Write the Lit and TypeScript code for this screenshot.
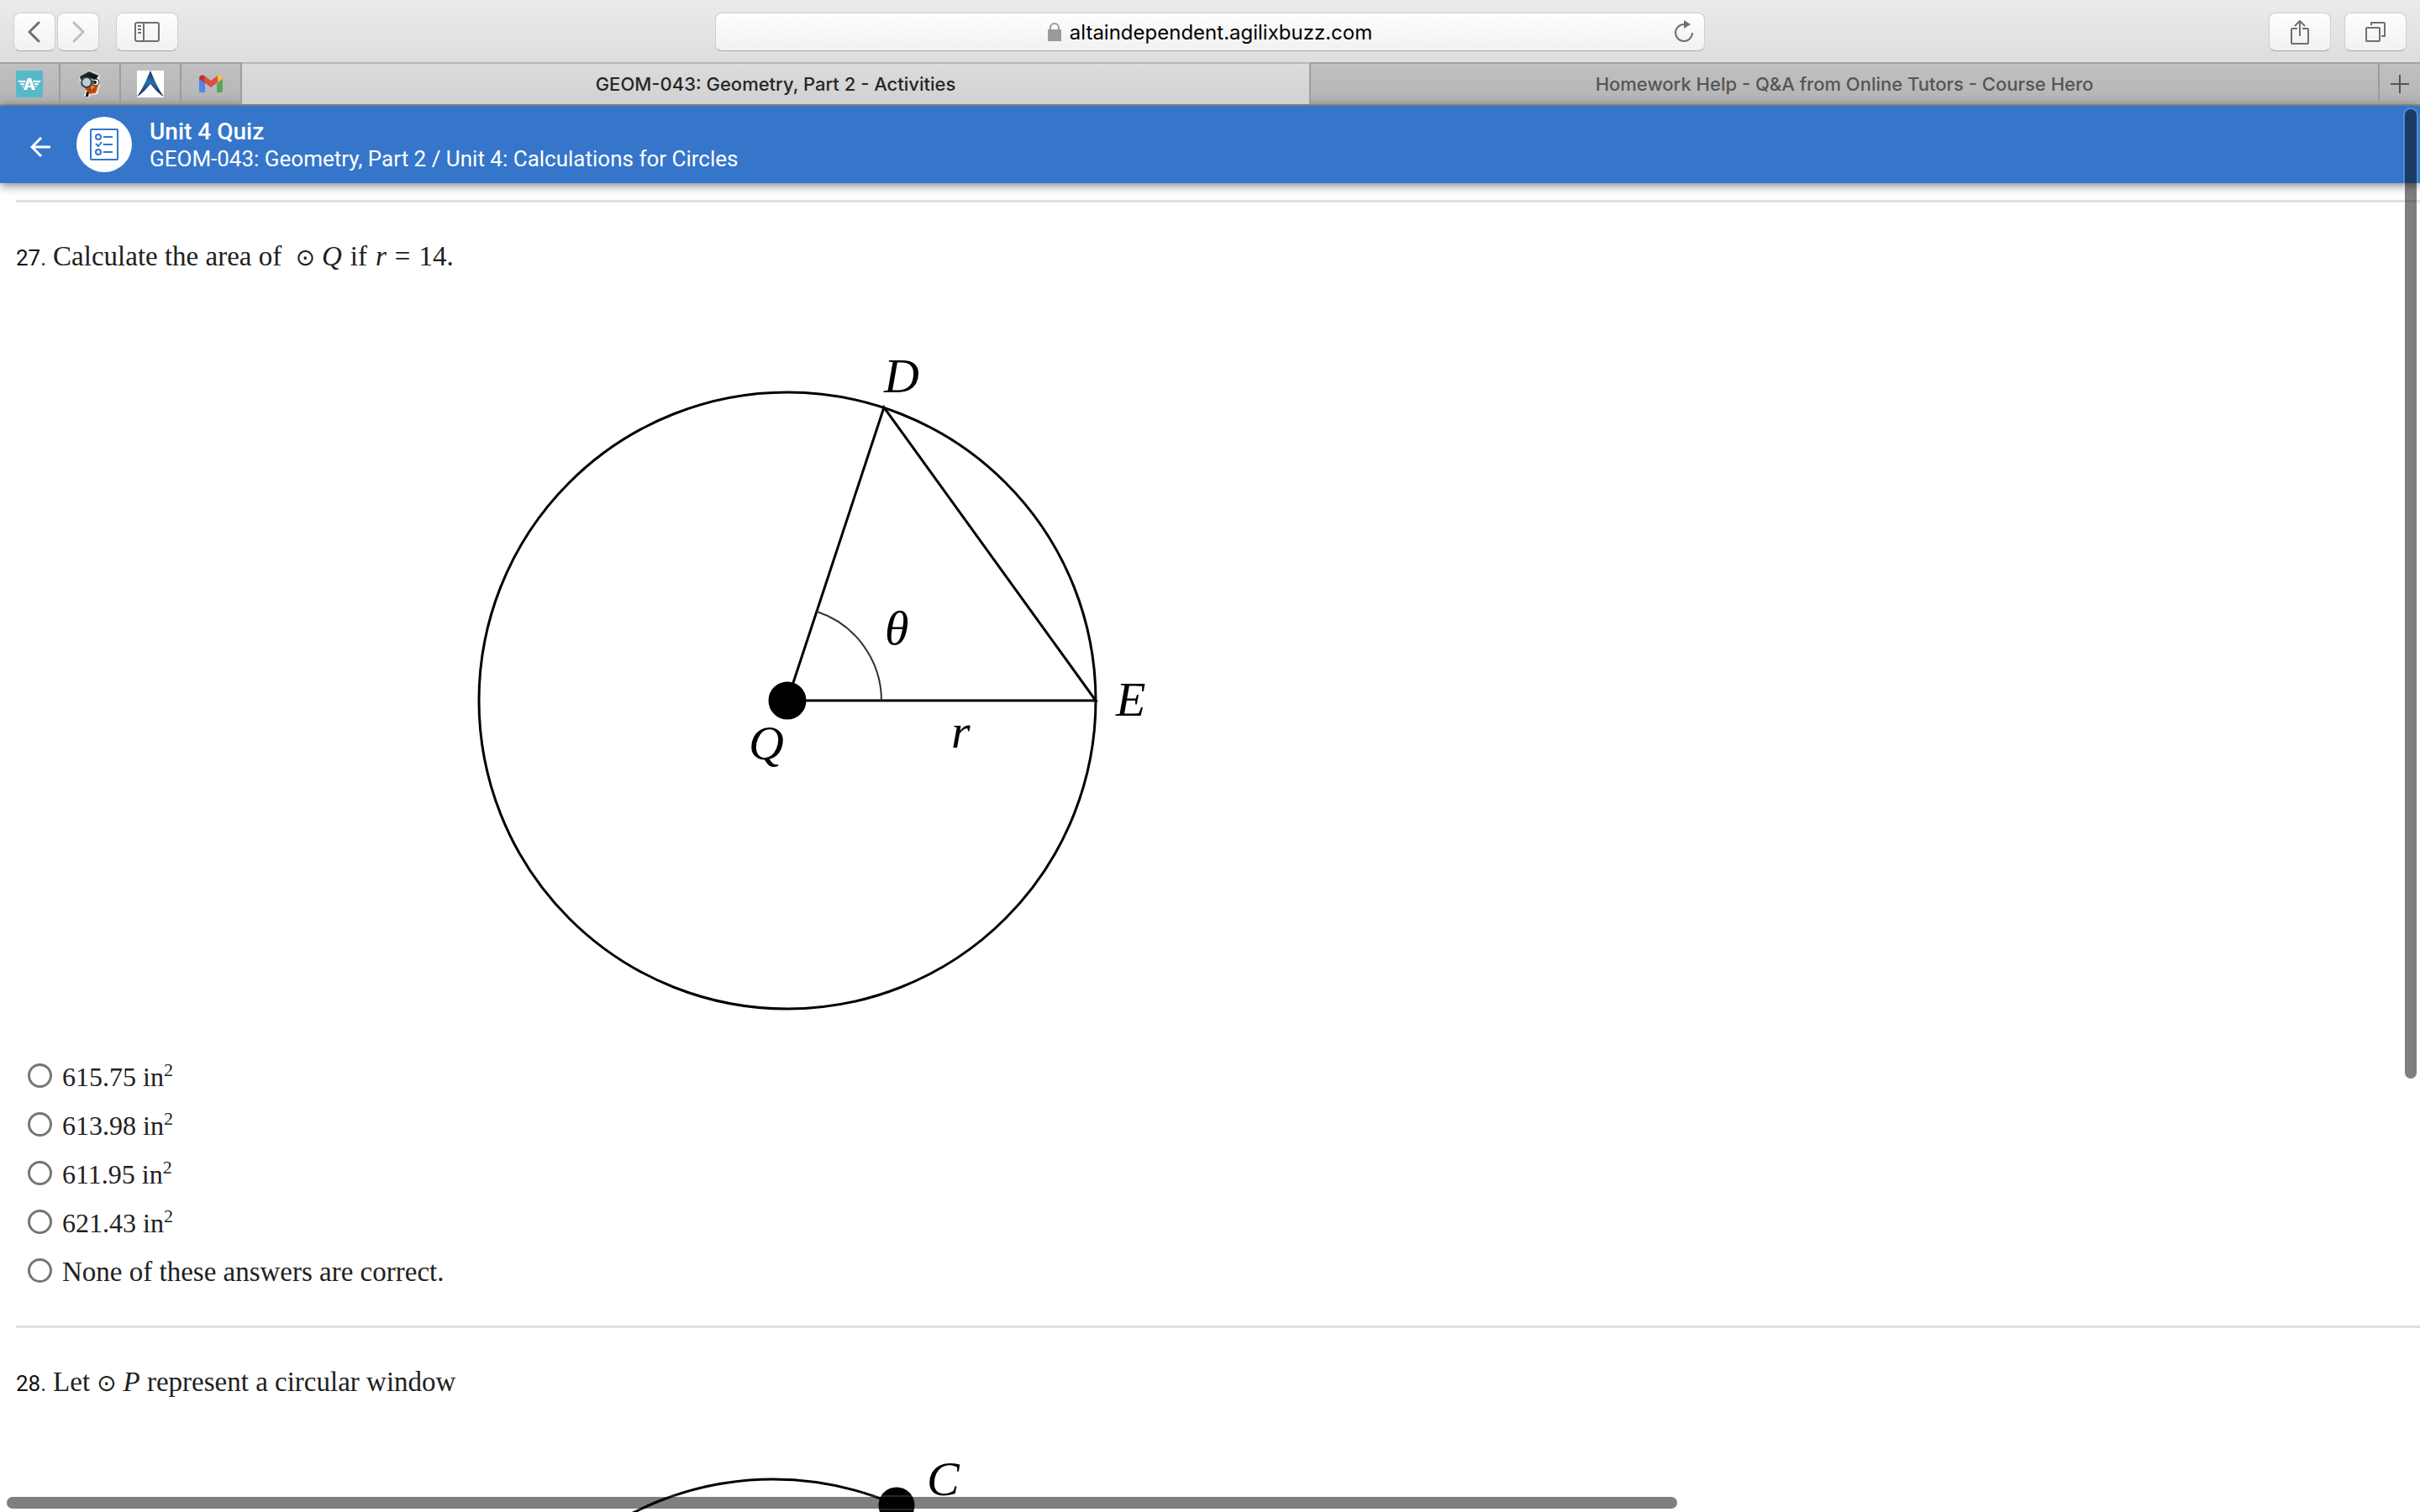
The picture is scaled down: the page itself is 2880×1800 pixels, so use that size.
import { LitElement, html, css, svg } from "lit";
import { customElement, property } from "lit/decorators.js";

const answers = [
  { value: "615.75", unit: "in" },
  { value: "613.98", unit: "in" },
  { value: "611.95", unit: "in" },
  { value: "621.43", unit: "in" },
];

@customElement("browser-toolbar")
class BrowserToolbar extends LitElement {
  static styles = css`
    :host { display: block; }
    * { box-sizing: border-box; }
    .bar {
      display: grid;
      grid-template-columns: 1fr minmax(400px, 1178px) 1fr;
      align-items: start;
      height: 74px;
      padding: 15px 16px 0;
      background: linear-gradient(#ebebeb, #dcdddc);
    }
    .group { display: flex; gap: 2px; }
    .right { justify-content: flex-end; gap: 16px; }
    button {
      display: flex;
      align-items: center;
      justify-content: center;
      height: 46px;
      width: 50px;
      padding: 0;
      border: 1px solid #cfcfcf;
      border-bottom-color: #a9a9a9;
      border-radius: 8px;
      background: linear-gradient(#fefefe, #f1f1f1);
      color: #6f6f6f;
    }
    .wide { width: 74px; }
    .spaced { margin-left: 18px; }
    .faded { color: #bdbdbd; }
    .address {
      display: flex;
      align-items: center;
      justify-content: center;
      height: 46px;
      padding: 0 12px;
      border: 1px solid #cfcfcf;
      border-bottom-color: #a9a9a9;
      border-radius: 8px;
      background: linear-gradient(#fefefe, #f1f1f1);
    }
    .site { display: flex; flex: 1; align-items: center; justify-content: center; gap: 10px; padding-left: 24px; }
    .address input {
      field-sizing: content;
      padding: 2px 0 0;
      border: 0;
      background: none;
      font: 24px/30px Inter, sans-serif;
      color: #000;
    }
    .reload { width: 24px; height: 32px; border: 0; background: none; }
    svg { display: block; fill: none; stroke: currentColor; }
  `;
  render() {
    return html`
      <div class="bar">
        <div class="group">
          <button aria-label="Back"><svg width="16" height="26" viewBox="0 0 16 26" stroke-width="3" stroke-linecap="round" stroke-linejoin="round"><path d="M13 2 2 13l11 11" /></svg></button>
          <button class="faded" aria-label="Forward"><svg width="16" height="26" viewBox="0 0 16 26" stroke-width="3" stroke-linecap="round" stroke-linejoin="round"><path d="M3 2l11 11L3 24" /></svg></button>
          <button class="wide spaced" aria-label="Sidebar"><svg width="30" height="24" viewBox="0 0 30 24" stroke-width="2"><rect x="1" y="1" width="28" height="22" rx="2" /><path d="M11 1v22M4 5h4M4 9h4M4 13h4" /></svg></button>
        </div>
        <div class="address">
          <span class="site">
            <svg width="16" height="22" viewBox="0 0 16 22" color="#9a9a9a" stroke-width="2"><rect x="1" y="9" width="14" height="12" fill="currentColor" /><path d="M3 9V6a5 5 0 0 1 10 0v3" /></svg>
            <input aria-label="Address" value="altaindependent.agilixbuzz.com" />
          </span>
          <button class="reload" aria-label="Reload"><svg width="24" height="28" viewBox="0 0 24 28" stroke-width="2"><path d="M12 5a10 10 0 1 0 10 10" /><path d="M12 0l8 5-8 5z" fill="currentColor" stroke="none" /></svg></button>
        </div>
        <div class="group right">
          <button class="wide" aria-label="Share"><svg width="24" height="32" viewBox="0 0 24 32" stroke-width="2"><path d="M9 12H3a1 1 0 0 0-1 1v16a1 1 0 0 0 1 1h18a1 1 0 0 0 1-1V13a1 1 0 0 0-1-1h-6M12 21V3M6 9l6-6 6 6" /></svg></button>
          <button class="wide" aria-label="Tabs"><svg width="24" height="24" viewBox="0 0 24 24" stroke-width="2"><rect x="1" y="7" width="16" height="16" rx="1" /><path d="M7 4V1h15a1 1 0 0 1 1 1v15h-4" /></svg></button>
        </div>
      </div>
    `;
  }
}

@customElement("browser-tabs")
class BrowserTabs extends LitElement {
  static styles = css`
    :host { display: block; }
    * { box-sizing: border-box; }
    .tabs {
      display: grid;
      grid-template-columns: repeat(4, 72px) 1fr 1fr 48px;
      height: 52px;
      border-bottom: 2px solid #9a9b9a;
      background: linear-gradient(#c1c1c1, #b3b4b3);
    }
    button {
      display: flex;
      align-items: center;
      justify-content: center;
      min-width: 0;
      padding: 0;
      border: 0;
      border-top: 2px solid #a1a1a1;
      border-right: 2px solid #9d9d9d;
      background: none;
      font: 500 22px/30px Inter, sans-serif;
      color: #555;
      white-space: nowrap;
    }
    .active { background: linear-gradient(#dcdcdc, #d0d1d0); border-top-color: #b9b9b9; color: #262626; }
    .add { border-right: 0; }
    svg { display: block; }
  `;
  render() {
    return html`
      <div class="tabs">
        <button aria-label="Pinned site 1">
          <svg width="32" height="32" viewBox="0 0 32 32"><rect width="32" height="32" fill="#56b9ca" /><g fill="#fff"><path d="M14 9h4l5 14h-4l-1-3h-4l-1 3H9zM16 13l-1.500 5h3z" fill-rule="evenodd" /><path d="M2 12h10l-1 2H3.500zM4.500 15.300h6l-1 2H5.800zM7 18.600h2.500l-1 2H8.500zM30 12H20l1 2h7.500zM27.500 15.300h-6l1 2h3.700zM25 18.600h-2.500l1 2z" /></g></svg>
        </button>
        <button aria-label="Pinned site 2">
          <svg width="32" height="32" viewBox="0 0 32 32"><path d="M3 8 15 0l13 5-1 5 1 7-3 11-8 1-3 3-5-2 2-6-6-8z" fill="#f2f2f2" /><path d="M8 15l17-4 1 8-3 8-7 1-6-6z" fill="#d9551f" /><path d="M12 22l3-2 3 4-1 3zM19 21l4-1-1 5-3 1z" fill="#b23712" /><path d="M17 18l4 1-2 4z" fill="#f0a02f" /><path d="M4 7l11-6 12 5-6 5-7-3-9 3z" fill="#26282b" /><path d="M9 6l9-2 7 3-1 4-9-3-6 2z" fill="#151517" /><circle cx="12" cy="14" r="6" fill="#b8cfd3" stroke="#33414a" stroke-width="2" /><circle cx="23" cy="14" r="4" fill="#f4f4f4" stroke="#333" /><circle cx="22" cy="14" r="2" fill="#111" /><path d="M12 25l3 1-1 5h-3z" fill="#111" /></svg>
        </button>
        <button aria-label="Pinned site 3">
          <svg width="32" height="32" viewBox="0 0 32 32"><defs><linearGradient id="peak" x1="0" y1="0" x2="0" y2="1"><stop offset="0" stop-color="#12305e" /><stop offset=".45" stop-color="#2d6cad" /><stop offset="1" stop-color="#132350" /></linearGradient></defs><rect width="32" height="32" fill="#fff" /><path d="M16 0c3 7 9 22 16 31-7-4-11-9-16-15-5 6-9 11-16 15C7 22 13 7 16 0z" fill="url(#peak)" /></svg>
        </button>
        <button aria-label="Mail">
          <svg width="30" height="24" viewBox="0 0 30 24"><path d="M1 5v15a2 2 0 0 0 2 2h5V9z" fill="#4f86ec" /><path d="M29 5v15a2 2 0 0 1-2 2h-5V9z" fill="#58a55c" /><path d="M1 5a4 4 0 0 1 6-3l1 1v8L1 6z" fill="#b3332b" /><path d="M29 5a4 4 0 0 0-6-3l-1 1v8l7-5z" fill="#f2bd42" /><path d="M7 2l8 6 8-6v8l-8 6-8-6z" fill="#d95140" /></svg>
        </button>
        <button class="active">GEOM-043: Geometry, Part 2 - Activities</button>
        <button>Homework Help - Q&amp;A from Online Tutors - Course Hero</button>
        <button class="add" aria-label="New tab"><svg width="22" height="22" viewBox="0 0 22 22" stroke="#555" stroke-width="2"><path d="M11 0v22M0 11h22" /></svg></button>
      </div>
    `;
  }
}

@customElement("quiz-header")
class QuizHeader extends LitElement {
  static styles = css`
    :host { display: block; }
    .header {
      display: flex;
      align-items: center;
      height: 92px;
      background: #3576cb;
      color: #fff;
      box-shadow: 0 2px 12px rgba(0, 0, 0, 0.55);
    }
    .back { width: 24px; height: 24px; margin: 6px 31px 0 36px; padding: 0; border: 0; background: none; color: inherit; }
    .badge { display: flex; align-items: center; justify-content: center; width: 66px; height: 66px; border-radius: 50%; background: #fff; color: #3576cb; }
    .titles { margin-left: 21px; padding-top: 2px; font: 28px/32px Roboto, sans-serif; }
    h1, p { margin: 0; font: inherit; }
    h1 { font-weight: 500; }
    p { font-size: 26px; }
    svg { display: block; fill: none; stroke: currentColor; }
  `;
  render() {
    return html`
      <header class="header">
        <button class="back" aria-label="Go back"><svg width="24" height="24" viewBox="0 0 24 24" stroke-width="3"><path d="M24 12H3M13 1 2 12l11 11" /></svg></button>
        <span class="badge"><svg width="34" height="38" viewBox="0 0 34 38" stroke-width="2"><rect x="1" y="1" width="32" height="36" rx="1" /><circle cx="10" cy="10" r="3" /><circle cx="10" cy="28" r="3" /><path d="M16 10h11M16 19h11M16 28h11M7 18l3 3 4-5" /></svg></span>
        <div class="titles">
          <h1>Unit 4 Quiz</h1>
          <p>GEOM-043: Geometry, Part 2 / Unit 4: Calculations for Circles</p>
        </div>
      </header>
    `;
  }
}

@customElement("quiz-question")
class QuizQuestion extends LitElement {
  @property({ type: Number }) number = 0;
  static styles = css`
    :host { display: block; margin-left: 19px; border-top: 3px solid #e0e0e0; color: #212121; font: 33px/36px "Liberation Serif", serif; }
    .prompt { display: flex; align-items: baseline; gap: 8px; height: 36px; margin: 46px 0 77px; }
    .number { font: 26px/36px Roboto, sans-serif; color: #111; }
  `;
  render() {
    return html`
      <div class="prompt"><span class="number">${this.number}.</span><slot name="prompt"></slot></div>
      <slot></slot>
    `;
  }
}

@customElement("app-root")
class AppRoot extends LitElement {
  static styles = css`
    :host { display: block; height: 100vh; overflow: hidden; position: relative; background: #fff; }
    * { box-sizing: border-box; }
    .content { padding-top: 20px; }
    .sun { margin: 0 8px; font: 28px/36px "DejaVu Sans", sans-serif; }
    .gap { margin: 0 10px; }
    .figure { display: block; margin-left: 521px; overflow: visible; font: italic 58px "Liberation Serif", serif; fill: none; stroke: #000; stroke-width: 3; }
    .figure text { fill: #000; stroke: none; }
    .figure .angle { stroke: #333; stroke-width: 2; }
    .figure .dot { fill: #000; }
    .answers { margin: 0; padding: 49px 0 37px 14px; border: 0; }
    .answer { display: flex; align-items: center; gap: 12px; height: 58px; }
    .answer input { appearance: none; width: 29px; height: 29px; margin: 0; border: 3px solid #757575; border-radius: 50%; background: #fff; }
    .answer label { padding-top: 4px; }
    .math { font-size: 32px; }
    sup { font-size: 22px; line-height: 0; vertical-align: 12px; }
    .scroll { position: absolute; border-radius: 8px; background: rgba(0, 0, 0, 0.5); box-shadow: 0 0 0 2px rgba(255, 255, 255, 0.15); }
    .vertical { top: 130px; right: 4px; width: 14px; height: 1154px; }
    .horizontal { left: 8px; bottom: 4px; width: 1988px; height: 14px; }
  `;
  private firstFigure() {
    return svg`
      <circle cx="397" cy="434" r="367" />
      <path d="M397 434 512 85 764 434z" />
      <path class="angle" d="M432 328A112 112 0 0 1 509 434" />
      <circle class="dot" cx="397" cy="434" r="21" />
      <text x="512" y="67">D</text>
      <text x="788" y="452">E</text>
      <text x="592" y="490">r</text>
      <text x="351" y="504">Q</text>
      <text x="513" y="367">θ</text>`;
  }
  private secondFigure() {
    return svg`
      <circle cx="380" cy="388" r="367" />
      <circle class="dot" cx="527" cy="52" r="20" />
      <text x="563" y="40">C</text>`;
  }
  render() {
    return html`
      <browser-toolbar></browser-toolbar>
      <browser-tabs></browser-tabs>
      <quiz-header></quiz-header>
      <main class="content">
        <quiz-question number="27">
          <span slot="prompt">Calculate the area of&nbsp;<span class="sun">⊙</span><i>Q</i><span class="gap">if</span><i>r</i><span class="gap">=</span>14.</span>
          <svg class="figure" width="860" height="802" viewBox="0 0 860 802" role="img" aria-label="Circle Q with radius r and angle theta">${this.firstFigure()}</svg>
          <fieldset class="answers" aria-label="Answers">
            ${answers.map(
              (a, i) => html`<div class="answer"><input type="radio" name="q27" id="a${i}" /><label class="math" for="a${i}">${a.value} ${a.unit}<sup>2</sup></label></div>`
            )}
            <div class="answer"><input type="radio" name="q27" id="none" /><label for="none">None of these answers are correct.</label></div>
          </fieldset>
        </quiz-question>
        <quiz-question number="28">
          <span slot="prompt">Let<span class="sun">⊙</span><i>P</i> represent a circular window</span>
          <svg class="figure" width="860" height="802" viewBox="0 0 860 802" role="img" aria-label="Circle P with point C">${this.secondFigure()}</svg>
        </quiz-question>
      </main>
      <div class="scroll vertical"></div>
      <div class="scroll horizontal"></div>
    `;
  }
}
